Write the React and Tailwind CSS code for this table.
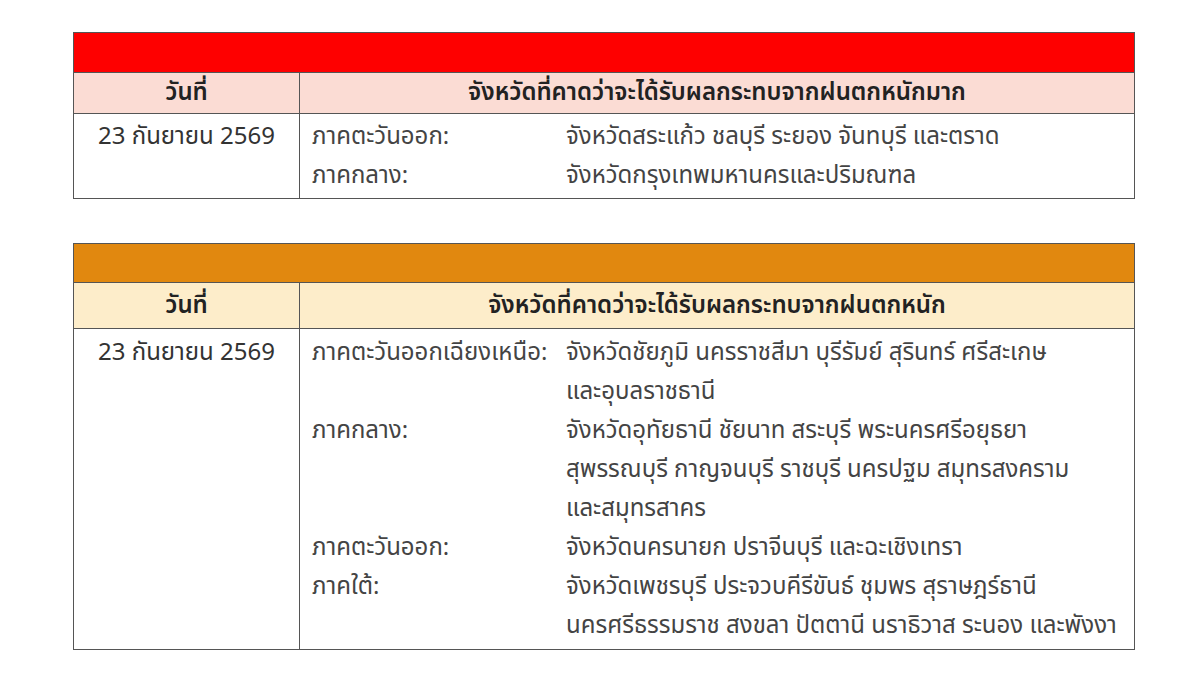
import React from 'react';

const font = { fontFamily: 'Tahoma, "Noto Sans Thai", "Noto Sans", "Liberation Sans", sans-serif' };

const tables = [
  {
    bar: 'bg-[#fe0000] h-[39px]',
    head: 'bg-[#fbdcd4] h-[41px]',
    pad: 'pt-[4px] pb-[2px]',
    title: 'จังหวัดที่คาดว่าจะได้รับผลกระทบจากฝนตกหนักมาก',
    date: '23 กันยายน 2569',
    regions: [
      { name: 'ภาคตะวันออก:', lines: ['จังหวัดสระแก้ว ชลบุรี ระยอง จันทบุรี และตราด'] },
      { name: 'ภาคกลาง:', lines: ['จังหวัดกรุงเทพมหานครและปริมณฑล'] },
    ],
  },
  {
    bar: 'bg-[#e1880f] h-[38px]',
    head: 'bg-[#fdedca] h-[46px]',
    pad: 'pt-[5px] pb-[3px]',
    title: 'จังหวัดที่คาดว่าจะได้รับผลกระทบจากฝนตกหนัก',
    date: '23 กันยายน 2569',
    regions: [
      {
        name: 'ภาคตะวันออกเฉียงเหนือ:',
        lines: ['จังหวัดชัยภูมิ นครราชสีมา บุรีรัมย์ สุรินทร์ ศรีสะเกษ', 'และอุบลราชธานี'],
      },
      {
        name: 'ภาคกลาง:',
        lines: [
          'จังหวัดอุทัยธานี ชัยนาท สระบุรี พระนครศรีอยุธยา',
          'สุพรรณบุรี กาญจนบุรี ราชบุรี นครปฐม สมุทรสงคราม',
          'และสมุทรสาคร',
        ],
      },
      { name: 'ภาคตะวันออก:', lines: ['จังหวัดนครนายก ปราจีนบุรี และฉะเชิงเทรา'] },
      {
        name: 'ภาคใต้:',
        lines: [
          'จังหวัดเพชรบุรี ประจวบคีรีขันธ์ ชุมพร สุราษฎร์ธานี',
          'นครศรีธรรมราช สงขลา ปัตตานี นราธิวาส ระนอง และพังงา',
        ],
      },
    ],
  },
];

function RainTable({ t }) {
  return (
    <div className="w-[1062px] border border-[#555] text-[24px]">
      <div className={t.bar} />
      <div className={`grid grid-cols-[225px_1fr] border-t border-[#555] ${t.head}`}>
        <div className="flex items-center justify-center font-semibold text-[#222]">วันที่</div>
        <div className="flex items-center justify-center font-semibold text-[#222] border-l border-[#555]">
          {t.title}
        </div>
      </div>
      <div className="grid grid-cols-[225px_1fr] border-t border-[#555] bg-white">
        <div className={`leading-[39px] text-center text-[#333] ${t.pad}`}>{t.date}</div>
        <div className={`border-l border-[#555] pl-3 text-[#444] ${t.pad}`}>
          {t.regions.map((r) => (
            <div key={r.name} className="grid grid-cols-[254px_1fr] leading-[39px]">
              <div>{r.name}</div>
              <div>
                {r.lines.map((l) => (
                  <div key={l}>{l}</div>
                ))}
              </div>
            </div>
          ))}
        </div>
      </div>
    </div>
  );
}

export default function App() {
  return (
    <div className="w-[1200px] h-[683px] bg-white pt-[32px] pl-[73px] flex flex-col gap-[44px]" style={font}>
      {tables.map((t) => (
        <RainTable key={t.title} t={t} />
      ))}
    </div>
  );
}
